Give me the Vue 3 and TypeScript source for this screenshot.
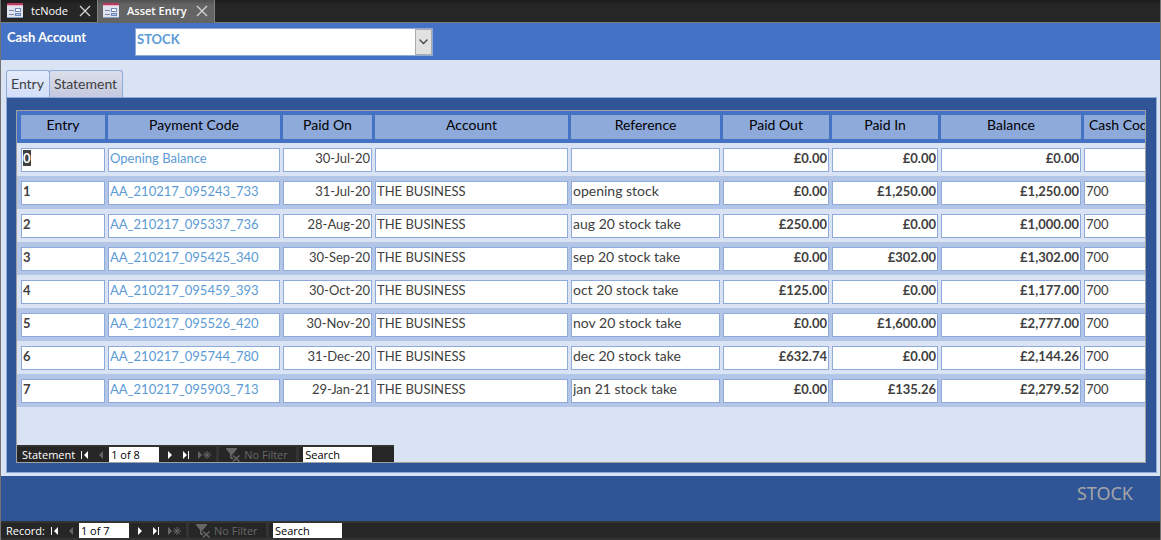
<script setup lang="ts">
import { onMounted, ref } from 'vue'

interface Column {
  key: string
  label: string
  kind: string
}

const columns: Column[] = [
  { key: 'entry', label: 'Entry', kind: 'strong' },
  { key: 'code', label: 'Payment Code', kind: 'link' },
  { key: 'paidOn', label: 'Paid On', kind: 'right' },
  { key: 'account', label: 'Account', kind: 'plain' },
  { key: 'reference', label: 'Reference', kind: 'prose' },
  { key: 'paidOut', label: 'Paid Out', kind: 'strong right' },
  { key: 'paidIn', label: 'Paid In', kind: 'strong right' },
  { key: 'balance', label: 'Balance', kind: 'strong right' },
  { key: 'cashCode', label: 'Cash Code', kind: 'plain' },
]

const rows = ref<string[][]>([
  ['0', 'Opening Balance', '30-Jul-20', '', '', '£0.00', '£0.00', '£0.00', ''],
  ['1', 'AA_210217_095243_733', '31-Jul-20', 'THE BUSINESS', 'opening stock', '£0.00', '£1,250.00', '£1,250.00', '700'],
  ['2', 'AA_210217_095337_736', '28-Aug-20', 'THE BUSINESS', 'aug 20 stock take', '£250.00', '£0.00', '£1,000.00', '700'],
  ['3', 'AA_210217_095425_340', '30-Sep-20', 'THE BUSINESS', 'sep 20 stock take', '£0.00', '£302.00', '£1,302.00', '700'],
  ['4', 'AA_210217_095459_393', '30-Oct-20', 'THE BUSINESS', 'oct 20 stock take', '£125.00', '£0.00', '£1,177.00', '700'],
  ['5', 'AA_210217_095526_420', '30-Nov-20', 'THE BUSINESS', 'nov 20 stock take', '£0.00', '£1,600.00', '£2,777.00', '700'],
  ['6', 'AA_210217_095744_780', '31-Dec-20', 'THE BUSINESS', 'dec 20 stock take', '£632.74', '£0.00', '£2,144.26', '700'],
  ['7', 'AA_210217_095903_713', '29-Jan-21', 'THE BUSINESS', 'jan 21 stock take', '£0.00', '£135.26', '£2,279.52', '700'],
])

const activeTab = ref('Entry')
const grid = ref<HTMLTableElement | null>(null)

onMounted(() => {
  const first = grid.value?.querySelector('input')
  first?.focus()
  first?.select()
})
</script>

<template>
  <div class="window">
    <svg class="defs" aria-hidden="true">
      <symbol id="form" viewBox="0 0 16 16">
        <rect x="0" y="0" width="16" height="15" fill="#dfe3ee" />
        <rect x="0" y="0" width="16" height="2" fill="#b83a62" />
        <rect x="0" y="2" width="16" height="1" fill="#e9b3c2" />
        <path d="M2 7.500h5M2 11.500h5" stroke="#8089a3" />
        <rect x="8.500" y="5.500" width="5" height="3" fill="#fff" stroke="#6f88bb" />
        <rect x="8.500" y="10.500" width="5" height="2" fill="#b7c6e6" stroke="#6f88bb" />
        <path d="M0 14.500h16" stroke="#8c9cc0" />
      </symbol>
      <symbol id="close" viewBox="0 0 12 12">
        <path d="M1 1l10 10M11 1L1 11" stroke="#d8d8d8" stroke-width="1.2" fill="none" />
      </symbol>
      <symbol id="first" viewBox="0 0 8 8">
        <path d="M0 0h1v8H0zM7 0v8L3 4z" fill="currentColor" />
      </symbol>
      <symbol id="prev" viewBox="0 0 8 8">
        <path d="M6 0v8L2 4z" fill="currentColor" />
      </symbol>
      <symbol id="next" viewBox="0 0 8 8">
        <path d="M2 0v8l4-4z" fill="currentColor" />
      </symbol>
      <symbol id="last" viewBox="0 0 8 8">
        <path d="M1 0v8l4-4zM6 0h1v8H6z" fill="currentColor" />
      </symbol>
      <symbol id="new" viewBox="0 0 13 8">
        <path d="M0 0v8l4-4z" fill="currentColor" />
        <path d="M9 0v8M5 4h8M6.200 1.200l5.600 5.600M11.800 1.200L6.200 6.800" stroke="currentColor" fill="none" />
      </symbol>
      <symbol id="filter" viewBox="0 0 14 14">
        <path d="M0 0h11v1L7 6v6l-3-2V6L0 1z" fill="currentColor" />
        <path d="M6 7l8 7M14 7l-8 7" stroke="#262626" stroke-width="3" />
        <path d="M7 7.500l6.500 6M13.500 7.500l-6.500 6" stroke="currentColor" stroke-width="1.500" />
      </symbol>
    </svg>

    <nav class="docs" aria-label="Open objects">
      <div class="doc">
        <svg class="form-icon"><use href="#form" /></svg>
        <button class="doc-name" type="button">tcNode</button>
        <button class="doc-close" type="button" aria-label="Close tcNode"><svg><use href="#close" /></svg></button>
      </div>
      <div class="doc current">
        <svg class="form-icon"><use href="#form" /></svg>
        <button class="doc-name" type="button">Asset Entry</button>
        <button class="doc-close" type="button" aria-label="Close Asset Entry"><svg><use href="#close" /></svg></button>
      </div>
    </nav>

    <header class="form-head">
      <label for="cash-account">Cash Account</label>
      <div class="combo">
        <select id="cash-account">
          <option>STOCK</option>
        </select>
        <span class="drop" aria-hidden="true">
          <svg viewBox="0 0 9 6"><path d="M.5.5l4 4 4-4" fill="none" stroke="#444" stroke-width="1.3" /></svg>
        </span>
      </div>
    </header>

    <main class="detail">
      <div class="tabs" role="tablist">
        <button
          v-for="tab in ['Entry', 'Statement']"
          :key="tab"
          type="button"
          role="tab"
          class="tab"
          :class="{ on: tab === activeTab }"
          :aria-selected="activeTab === tab"
          @click="activeTab = tab"
        >{{ tab }}</button>
      </div>
      <section class="page">
        <div class="subform">
          <div class="scroller">
            <table ref="grid">
              <colgroup>
                <col v-for="c in columns" :key="c.key" :class="'w-' + c.key">
              </colgroup>
              <thead>
                <tr>
                  <th v-for="c in columns" :key="c.key" scope="col"><div>{{ c.label }}</div></th>
                </tr>
              </thead>
              <tbody>
                <tr v-for="(row, r) in rows" :key="r">
                  <td v-for="(c, i) in columns" :key="c.key">
                    <input v-model="row[i]" type="text" :class="c.kind" :aria-label="c.label">
                  </td>
                </tr>
              </tbody>
            </table>
          </div>
          <div class="records">
            <div class="group">
              <label for="statement-pos">Statement</label>
              <button type="button" class="step" aria-label="First record"><svg><use href="#first" /></svg></button>
              <button type="button" class="step" aria-label="Previous record" disabled><svg><use href="#prev" /></svg></button>
              <input id="statement-pos" class="pos" type="text" value="1 of 8">
              <button type="button" class="step" aria-label="Next record"><svg><use href="#next" /></svg></button>
              <button type="button" class="step" aria-label="Last record"><svg><use href="#last" /></svg></button>
              <button type="button" class="step add" aria-label="New record" disabled><svg><use href="#new" /></svg></button>
            </div>
            <button type="button" class="group filter" disabled><svg><use href="#filter" /></svg>No Filter</button>
            <div class="group find"><input type="text" value="Search" aria-label="Search statement"></div>
          </div>
        </div>
      </section>
    </main>

    <footer class="form-foot">STOCK</footer>

    <div class="records outer">
      <div class="group">
        <label for="record-pos">Record:</label>
        <button type="button" class="step" aria-label="First record"><svg><use href="#first" /></svg></button>
        <button type="button" class="step" aria-label="Previous record" disabled><svg><use href="#prev" /></svg></button>
        <input id="record-pos" class="pos" type="text" value="1 of 7">
        <button type="button" class="step" aria-label="Next record"><svg><use href="#next" /></svg></button>
        <button type="button" class="step" aria-label="Last record"><svg><use href="#last" /></svg></button>
        <button type="button" class="step add" aria-label="New record" disabled><svg><use href="#new" /></svg></button>
      </div>
      <button type="button" class="group filter" disabled><svg><use href="#filter" /></svg>No Filter</button>
      <div class="group find"><input type="text" value="Search" aria-label="Search records"></div>
    </div>
  </div>
</template>

<style>
body {
  margin: 0;
}
</style>

<style scoped>
* {
  box-sizing: border-box;
}

button,
input,
select {
  margin: 0;
  padding: 0;
  border: 0;
  border-radius: 0;
  background: none;
  color: inherit;
  font: inherit;
  outline: none;
}

svg {
  display: block;
}

.defs {
  position: absolute;
  width: 0;
  height: 0;
}

.window {
  display: flex;
  flex-direction: column;
  min-height: 100vh;
  border-left: 1px solid #737373;
  border-right: 1px solid #737373;
  background: #dae3f3;
  font: 13px/18px Lato, sans-serif;
  color: #404040;
}

.docs {
  display: flex;
  height: 23px;
  padding-left: 1px;
  border-bottom: 1px solid #7b7b7b;
  background: linear-gradient(#1c1c1c, #262626 5px);
  color: #fff;
  font: 11px/20px "Open Sans", "Noto Sans", sans-serif;
}

.doc {
  display: flex;
  align-items: center;
  height: 22px;
  padding: 0 6px 0 5px;
}

.doc.current {
  height: 23px;
  padding: 0 6px 1px 5px;
  border: solid #828282;
  border-width: 0 1px;
  background: linear-gradient(#505050, #646464 5px);
  font-weight: 600;
}

.form-icon {
  width: 16px;
  height: 16px;
  margin-right: 8px;
}

.doc-close {
  margin-left: 11px;
}

.current .doc-close {
  margin-left: 9px;
}

.doc-close svg {
  width: 12px;
  height: 12px;
}

.form-head {
  display: flex;
  align-items: flex-start;
  height: 37px;
  padding: 5px 6px;
  background: #4472c4;
}

.form-head label {
  width: 128px;
  color: #fff;
  font-weight: 700;
}

.combo {
  position: relative;
  width: 298px;
  height: 28px;
  border: 1px solid #8eaadb;
  background: #fff;
}

.combo select {
  display: block;
  width: 100%;
  height: 26px;
  padding: 0 0 6px 1px;
  appearance: none;
  color: #5b9bd5;
  font-weight: 700;
}

.drop {
  position: absolute;
  top: 0;
  right: 0;
  display: grid;
  place-items: center;
  width: 17px;
  height: 26px;
  border: 1px solid #ababab;
  background: #e1e1e1;
  pointer-events: none;
}

.drop svg {
  width: 9px;
  height: 6px;
}

.detail {
  display: flex;
  flex: 1;
  flex-direction: column;
  padding: 10px 3px 3px 5px;
}

.tabs {
  display: flex;
}

.tab {
  height: 27px;
  padding: 0 5px 0 4px;
  border: 1px solid #8eaadb;
  border-bottom: 0;
  border-radius: 3px 3px 0 0;
  background: linear-gradient(#dcdfe9, #c4c9df);
  font-size: 14px;
}

.tab + .tab {
  margin-left: -1px;
}

.tab.on {
  background: linear-gradient(#e4ebfb, #d3dffa);
}

.page {
  display: flex;
  flex: 1;
  padding: 12px 10px 9px 9px;
  border: 1px solid #8eaadb;
  background: #2f5597;
}

.subform {
  display: flex;
  flex: 1;
  flex-direction: column;
  min-width: 0;
  border: 1px solid #a0a0a0;
  background: #dae3f3;
}

.scroller {
  flex: 1;
  overflow: hidden;
}

table {
  width: 1146px;
  table-layout: fixed;
  border-collapse: collapse;
}

.w-entry {
  width: 91px;
}

.w-code {
  width: 175px;
}

.w-paidOn {
  width: 92px;
}

.w-account {
  width: 196px;
}

.w-reference {
  width: 152px;
}

.w-paidOut,
.w-paidIn {
  width: 109px;
}

.w-balance {
  width: 143px;
}

th {
  padding: 4px 3px 4px 0;
  background: #4472c4;
  color: #000;
  font-size: 14px;
  font-weight: 400;
}

th div {
  height: 24px;
  background: #8eaadb;
  line-height: 20px;
}

td {
  padding: 5px 3px 4px 0;
}

th:first-child,
td:first-child {
  padding-left: 4px;
}

tbody tr:nth-child(even) {
  background: #b4c6e7;
}

td input {
  display: block;
  width: 100%;
  height: 24px;
  padding: 0 1px 5px;
  border: 1px solid #8eaadb;
  background: #fff;
}

td input::selection {
  background: #404040;
  color: #fff;
}

.strong {
  font-weight: 700;
}

.prose {
  font-size: 14px;
}

.link {
  color: #5b9bd5;
}

.right {
  text-align: right;
}

.records {
  display: flex;
  align-self: flex-start;
  gap: 3px;
  width: 377px;
  padding-top: 2px;
  background: #333;
  color: #fff;
  font: 11px/15px "Open Sans", "Noto Sans", sans-serif;
}

.records.outer {
  align-self: stretch;
  width: auto;
  padding-bottom: 2px;
}

.group {
  display: flex;
  align-items: center;
  height: 15px;
  padding: 0 5px;
  background: #262626;
}

.step {
  width: 8px;
  margin-left: 6px;
}

.step + .step {
  margin-left: 8px;
}

.pos + .step {
  margin-left: 7px;
}

.step svg {
  width: 8px;
  height: 8px;
}

.step:disabled,
.filter {
  color: #666;
}

.step.add,
.step.add svg {
  width: 13px;
}

.records input {
  height: 15px;
  padding: 0 2px;
  background: #fff;
  color: #000;
}

.pos {
  width: 50px;
  margin-left: 4px;
}

.filter {
  width: 77px;
  gap: 4px;
  padding: 0 7px;
  white-space: nowrap;
}

.filter svg {
  flex: none;
  width: 14px;
  height: 14px;
}

.find {
  flex: 1;
  padding: 0 4px;
}

.find input {
  width: 69px;
}

.form-foot {
  height: 45px;
  padding: 4px 27px;
  background: #2f5597;
  color: #a5a5a5;
  font: 18px/26px "Noto Sans", sans-serif;
  text-align: right;
}
</style>
